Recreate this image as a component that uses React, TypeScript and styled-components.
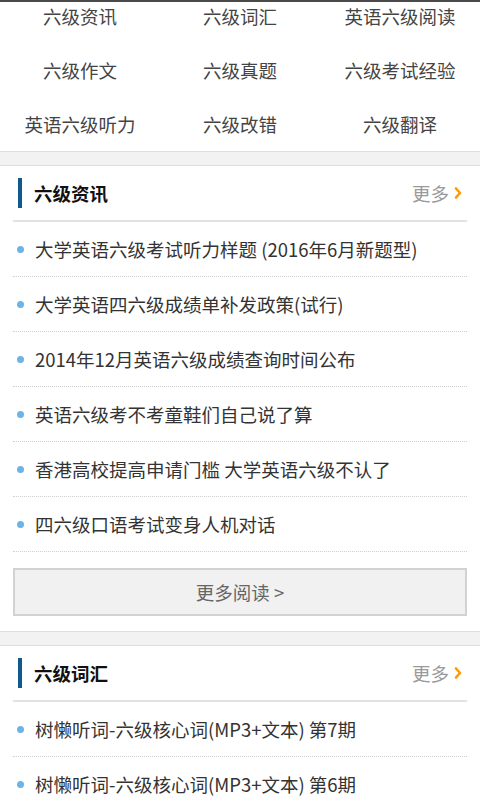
import React from "react";
import styled, { createGlobalStyle } from "styled-components";

const GlobalStyle = createGlobalStyle`
  html, body {
    margin: 0;
    padding: 0;
    background: #ffffff;
    font-family: "Noto Sans CJK SC", "Noto Sans", sans-serif;
  }
`;

const Page = styled.div`
  width: 480px;
  height: 800px;
  overflow: hidden;
  border-top: 2px solid #4a4a4a;
  box-sizing: border-box;
  background: #ffffff;
`;

const NavViewport = styled.div`
  height: 149px;
  overflow: hidden;
`;

const NavGrid = styled.div`
  margin-top: -13px;
  display: grid;
  grid-template-columns: repeat(3, 1fr);
  grid-auto-rows: 54px;
`;

const NavItem = styled.a`
  display: flex;
  align-items: center;
  justify-content: center;
  font-size: 18.5px;
  color: #444444;
  text-decoration: none;
`;

const Band = styled.div`
  height: 13px;
  background: #f2f2f2;
  border-top: 1px solid #dddddd;
  border-bottom: 1px solid #dddddd;
`;

const Section = styled.section`
  padding: 0 13px;
`;

const Header = styled.div`
  height: 54px;
  display: flex;
  align-items: center;
  border-bottom: 2px solid #e2e2e2;
  padding: 0 5px;
`;

const TitleBar = styled.span`
  width: 4px;
  height: 30px;
  background: #0f5a8c;
  margin-right: 12px;
`;

const Title = styled.h2`
  margin: 0;
  flex: 1;
  font-size: 18.5px;
  font-weight: 700;
  color: #111111;
`;

const More = styled.a`
  display: flex;
  align-items: center;
  gap: 5px;
  font-size: 18.5px;
  color: #9a9a9a;
  text-decoration: none;
`;

const List = styled.ul`
  list-style: none;
  margin: 0;
  padding: 0;
`;

const Item = styled.li`
  height: 55px;
  display: flex;
  align-items: center;
  border-bottom: 1px dotted #cfcfcf;
  padding-left: 4px;
  box-sizing: border-box;
`;

const Dot = styled.span`
  width: 7px;
  height: 7px;
  border-radius: 50%;
  background: #6cb3e8;
  margin-right: 11px;
  flex-shrink: 0;
`;

const ItemText = styled.span`
  font-size: 18.5px;
  color: #333333;
  white-space: nowrap;
`;

const MoreButton = styled.button`
  display: block;
  width: 100%;
  height: 48px;
  margin: 16px 0 15px;
  background: #f1f1f1;
  border: 2px solid #d2d2d2;
  font-family: inherit;
  font-size: 18.5px;
  color: #666666;
`;

const Chevron = () => (
  <svg width="8" height="12" viewBox="0 0 8 12">
    <path
      d="M2 1.5 L6 6 L2 10.5"
      fill="none"
      stroke="#ff9b00"
      strokeWidth="2.6"
      strokeLinecap="round"
      strokeLinejoin="round"
    />
  </svg>
);

const navLinks = [
  "六级资讯",
  "六级词汇",
  "英语六级阅读",
  "六级作文",
  "六级真题",
  "六级考试经验",
  "英语六级听力",
  "六级改错",
  "六级翻译",
];

const newsItems = [
  "大学英语六级考试听力样题 (2016年6月新题型)",
  "大学英语四六级成绩单补发政策(试行)",
  "2014年12月英语六级成绩查询时间公布",
  "英语六级考不考童鞋们自己说了算",
  "香港高校提高申请门槛 大学英语六级不认了",
  "四六级口语考试变身人机对话",
];

const vocabItems = [
  "树懒听词-六级核心词(MP3+文本) 第7期",
  "树懒听词-六级核心词(MP3+文本) 第6期",
];

function SectionHeader({ title }: { title: string }) {
  return (
    <Header>
      <TitleBar />
      <Title>{title}</Title>
      <More>
        更多
        <Chevron />
      </More>
    </Header>
  );
}

export default function App() {
  return (
    <>
      <GlobalStyle />
      <Page>
        <NavViewport>
          <NavGrid>
            {navLinks.map((l) => (
              <NavItem key={l}>{l}</NavItem>
            ))}
          </NavGrid>
        </NavViewport>
        <Band />
        <Section>
          <SectionHeader title="六级资讯" />
          <List>
            {newsItems.map((t) => (
              <Item key={t}>
                <Dot />
                <ItemText>{t}</ItemText>
              </Item>
            ))}
          </List>
          <MoreButton>更多阅读 &gt;</MoreButton>
        </Section>
        <Band />
        <Section>
          <SectionHeader title="六级词汇" />
          <List>
            {vocabItems.map((t) => (
              <Item key={t}>
                <Dot />
                <ItemText>{t}</ItemText>
              </Item>
            ))}
          </List>
        </Section>
      </Page>
    </>
  );
}
